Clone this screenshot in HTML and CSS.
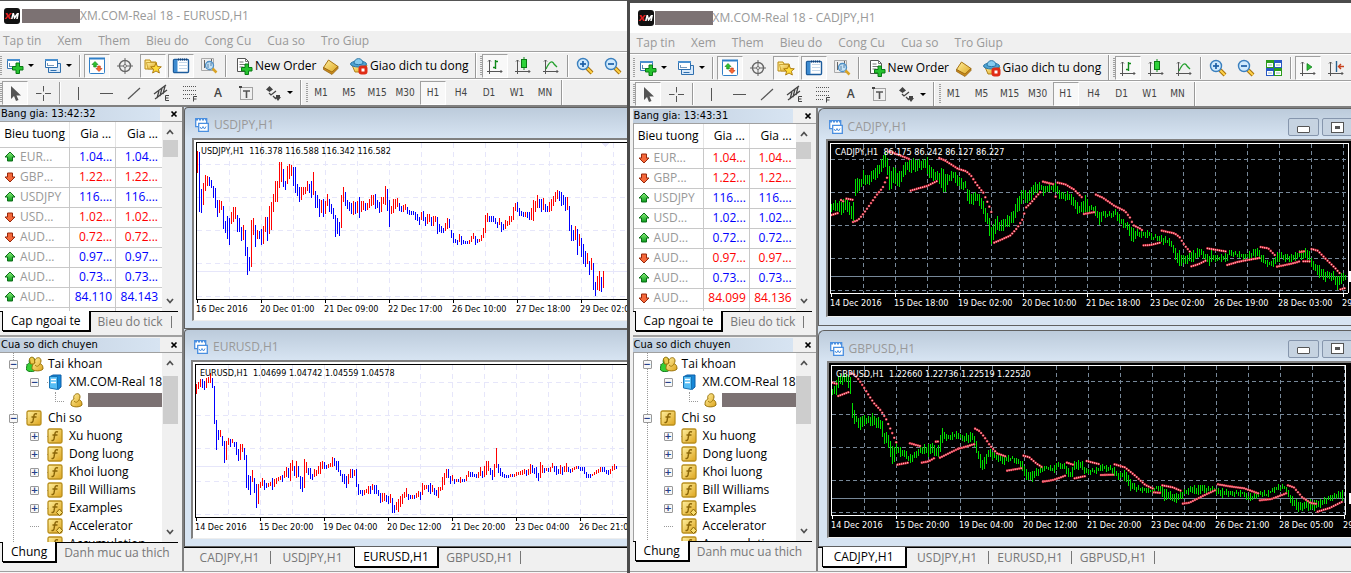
FILE: index.html
```html
<!DOCTYPE html>
<html lang="vi">
<head>
<meta charset="utf-8">
<title>XM.COM-Real 18</title>
<link rel="stylesheet" href="styles.css">
</head>
<body>
<svg class="sprite" aria-hidden="true">
  <linearGradient id="gold" x1="0" y1="0" x2="1" y2="1"><stop offset="0" stop-color="#fff0a0"/><stop offset="1" stop-color="#dda41c"/></linearGradient>
  <linearGradient id="leaf" x1="0" y1="0" x2="0" y2="1"><stop offset="0" stop-color="#8cf07c"/><stop offset="1" stop-color="#0a9a1a"/></linearGradient>
  <symbol id="logo" viewBox="0 0 16 16"><rect width="16" height="16" rx="3" fill="#111"/><path d="M1.500 5h2l1 2 1.500-2h2L5.500 8l1.500 3h-2L4 9l-1.500 2h-2l2.500-3z" fill="#e02020"/><path d="M7 11l1.500-6h1.500l.8 3L13 5h2l-1.200 6h-1.600l.6-3-2 3h-.8l-.8-3-.6 3z" fill="#fff"/></symbol>
  <symbol id="newchart" viewBox="0 0 18 18"><path d="M1.500 2.500h12v9h-12z" fill="#fff" stroke="#3a78b4"/><path d="M1 2h13v2H1z" fill="#4a90cf"/><path d="M3.500 6v4M3 9.500h6" stroke="#5b88b0" fill="none"/><path d="M10 6h3.500v3.500H17V13h-3.500v3.500H10V13H6.500V9.500H10z" fill="#26c22f" stroke="#087a14"/></symbol>
  <symbol id="profiles" viewBox="0 0 18 18"><path d="M4.500 6.500h12v9h-12z" fill="#d8e9fa" stroke="#2f6fae"/><path d="M6.500 13.500h6" stroke="#2f6fae"/><path d="M1.500 2.500h12v8h-12z" fill="#fff" stroke="#2f6fae"/><path d="M1 2h13v2H1z" fill="#4a90cf"/><path d="M3.500 6v3M3 8.500h7" stroke="#7799bb" fill="none"/></symbol>
  <symbol id="market" viewBox="0 0 18 18"><rect x="1.500" y="1.500" width="15" height="15" rx="1" fill="#fff" stroke="#2f7fc8"/><path d="M1 1.500h16" stroke="#2f7fc8" stroke-width="2"/><path d="M4 7.500L7 4.500l3 3H8.300v2.500H5.700V7.500z" fill="#2fc42f" stroke="#0a7a14" stroke-width=".6"/><path d="M8 11.500l3 3 3-3h-1.700V9H9.700v2.500z" fill="#ff6a30" stroke="#b02a08" stroke-width=".6"/></symbol>
  <symbol id="target" viewBox="0 0 18 18"><circle cx="9" cy="9" r="5.500" fill="none" stroke="#666" stroke-width="1.400"/><path d="M9 1v16M1 9h16" stroke="#666"/><circle cx="9" cy="9" r="1.500" fill="#eee" stroke="#777"/></symbol>
  <symbol id="star" viewBox="0 0 18 18"><path d="M1 3h5l1 2h5v7H1z" fill="#ffe98a" stroke="#b98a14"/><path d="M2.500 5.500h10V12H4z" fill="url(#gold)" stroke="#b98a14" stroke-width=".7"/><path d="M12 6l1.500 3.500 3.800.3-2.900 2.500 1 3.700L12 14l-3.400 2 1-3.700-2.900-2.500 3.800-.3z" fill="#ffdb3a" stroke="#a87508" stroke-width=".9"/></symbol>
  <symbol id="terminal" viewBox="0 0 18 18"><rect x="1.500" y="2.500" width="15" height="13" rx="1" fill="#fff" stroke="#1c5c9c" stroke-width="1.400"/><path d="M2 3h3.500v12H2z" fill="#3d8bd0"/><path d="M7 5.500h8M7 8.500h8M7 11.500h8" stroke="#c5d8ea"/><path d="M6 2.500h10" stroke="#173f75" stroke-width="2" stroke-dasharray="1 1"/></symbol>
  <symbol id="tester" viewBox="0 0 18 18"><path d="M1.500 1.500h12v12h-12z" fill="#eee" stroke="#aaa"/><path d="M4.500 3v8M8 4v3M11.500 2v5" stroke="#666"/><circle cx="9.500" cy="8.500" r="4" fill="#bfe0f7" fill-opacity=".85" stroke="#4d8fc6" stroke-width="1.300"/><path d="M8 7v4M11 6v3" stroke="#5580a8"/><path d="M12.500 11.500l4 4" stroke="#d9a326" stroke-width="2.500"/></symbol>
  <symbol id="order" viewBox="0 0 18 18"><path d="M2.500 1.500h8l3 3v10h-11z" fill="#fff" stroke="#555"/><path d="M10.500 1.500v3h3M4.500 5h4M4.500 7.500h6M4.500 10h4" stroke="#777" fill="none"/><path d="M10 7h3.500v3.500H17V14h-3.500v3.500H10V14H6.500v-3.500H10z" fill="#26c22f" stroke="#087a14"/></symbol>
  <symbol id="book" viewBox="0 0 18 18"><path d="M6.500 3L16 9.500 10 16 1.500 10.500z" fill="url(#gold)" stroke="#a87414"/><path d="M1.500 10.500v2L10 17.500l6-6v-2L10 15z" fill="#c98a1c" stroke="#8d5d0c" stroke-width=".7"/></symbol>
  <symbol id="expert" viewBox="0 0 18 18"><path d="M2 8l3 7h9l3-7z" fill="url(#gold)" stroke="#b1821a"/><ellipse cx="8.500" cy="7" rx="8" ry="3" fill="#4ea3d3" stroke="#2a75a5"/><path d="M4 6.500C4 0 13 0 13 6.500 11 8 6 8 4 6.500z" fill="#86ccef" stroke="#2a75a5"/><rect x="8.500" y="8.500" width="9" height="9" rx="3" fill="#e02c16"/><rect x="11.500" y="11.500" width="3" height="3" fill="#fff"/></symbol>
  <symbol id="axes" viewBox="0 0 18 18"><path d="M3.500 3v14M1 14.500h15M2 4.500L3.500 3 5 4.500M14.500 13l1.500 1.500-1.500 1.500" fill="none" stroke="#555"/></symbol>
  <symbol id="bars" viewBox="0 0 18 18"><use href="#axes"/><path d="M9.500 3v9M7 10.500h2M10 4.500h2" stroke="#108a1a" stroke-width="1.400"/></symbol>
  <symbol id="candles" viewBox="0 0 18 18"><use href="#axes"/><path d="M10 0v13" stroke="#108a1a"/><rect x="7.500" y="2.500" width="5" height="8" fill="#2fd23a" stroke="#0a7a14"/></symbol>
  <symbol id="line" viewBox="0 0 18 18"><use href="#axes"/><path d="M4 12q5-11 8-5l3 3" fill="none" stroke="#22a02c" stroke-width="1.300"/></symbol>
  <symbol id="lens" viewBox="0 0 18 18"><path d="M11 11l5 5" stroke="#a8720c" stroke-width="4"/><path d="M11 11l5 5" stroke="#ffd34a" stroke-width="2"/><circle cx="7" cy="7" r="5.500" fill="#cfeafd" stroke="#3a7fbe" stroke-width="1.400"/><path d="M4 7h6" stroke="#1c5fa6" stroke-width="1.700"/></symbol>
  <symbol id="lensplus" viewBox="0 0 18 18"><use href="#lens"/><path d="M7 4v6" stroke="#1c5fa6" stroke-width="1.700"/></symbol>
  <symbol id="tile" viewBox="0 0 18 18"><path d="M1 1h8v8H1zM9 9h8v8H9z" fill="#2c9c1c"/><path d="M9 1h8v8H9zM1 9h8v8H1z" fill="#2858c4"/><path d="M2 4h6v4H2zM10 4h6v4h-6zM2 12h6v4H2zM10 12h6v4h-6z" fill="#fff"/><path d="M3 6h4M11 6h4M3 14h4M11 14h4" stroke="#9bb"/></symbol>
  <symbol id="scroll" viewBox="0 0 18 18"><use href="#axes"/><path d="M8 4.500v7l5-3.500z" fill="#2cba34" stroke="#0a7a14" stroke-width=".7"/></symbol>
  <symbol id="shift" viewBox="0 0 18 18"><use href="#axes"/><path d="M9.500 2v11" stroke="#25618f" stroke-width="1.400"/><path d="M17 7.500h-5M14 5l-2.500 2.500L14 10" fill="none" stroke="#c8401c" stroke-width="1.400"/></symbol>
  <symbol id="cursor" viewBox="0 0 18 18"><path d="M5 2v13l3-3 2 5 2.500-1-2-4.500H15z" fill="#555"/></symbol>
  <symbol id="cross" viewBox="0 0 18 18"><path d="M9.500 2v5.500M9.500 11v6M2 9.500h5.500M11 9.500h6" stroke="#555"/></symbol>
  <symbol id="vline" viewBox="0 0 18 18"><path d="M9.500 3v13" stroke="#555"/></symbol>
  <symbol id="hline" viewBox="0 0 18 18"><path d="M3 9.500h13" stroke="#555"/></symbol>
  <symbol id="trend" viewBox="0 0 18 18"><path d="M3 15L15 4" stroke="#555" stroke-width="1.200"/></symbol>
  <symbol id="channel" viewBox="0 0 18 18"><path d="M1 10L13 1M2 15L14 6M4 14l2-7M7 12l2-8M10 10l2-8" stroke="#444" stroke-width="1.300"/><path d="M16 11.500h-3.500v5H16M12.500 14H15.500" fill="none" stroke="#444"/></symbol>
  <symbol id="fibo" viewBox="0 0 18 18"><path d="M2 2.500h14M2 6.500h14M2 10.500h14M2 14.500h8" stroke="#555" stroke-dasharray="1 1"/><path d="M12.500 17.500v-5H16M12.500 15H15.500" fill="none" stroke="#444"/></symbol>
  <symbol id="label" viewBox="0 0 18 18"><path d="M3.500 3.500h12v12h-12z" fill="none" stroke="#555" stroke-dasharray="1 1"/><path d="M2 2h3v2H2z" fill="#444"/><path d="M6 7h7M9.500 7v7" stroke="#555" stroke-width="1.600"/></symbol>
  <symbol id="shapes" viewBox="0 0 18 18"><path d="M1 5.500L4.500 2 8 5.500 4.500 8zM10 13h6l-3 4z M11 11h4v3h-4z" fill="#444"/><path d="M4 9l2 2 5-4M8 12l3 3" fill="none" stroke="#444" stroke-width="1.300"/></symbol>
  <symbol id="mdi" viewBox="0 0 14 14"><path d="M.7.7h11v8h-11z" fill="#fff" stroke="#4a8fe0" stroke-width="1.300"/><path d="M1 1.500h11" stroke="#4a8fe0" stroke-width="2" stroke-dasharray="2 1"/><path d="M3.700 5.300h9.600v8H3.700z" fill="#fff" stroke="#4a8fe0" stroke-width="1.300"/><path d="M5 9l1.500 2L8 8.500 9.500 11 11 8.500" fill="none" stroke="#4a8fe0"/></symbol>
  <symbol id="up" viewBox="0 0 12 12"><path d="M6 1l5 5H8.500v4h-5V6H1z" fill="url(#leaf)" stroke="#0b6e18"/></symbol>
  <symbol id="down" viewBox="0 0 12 12"><path d="M6 11L1 6h2.500V2h5v4H11z" fill="#f4683a" stroke="#97280c"/></symbol>
  <symbol id="chevup" viewBox="0 0 8 8"><path d="M1 6l3-3.500L7 6" fill="none" stroke="#505050" stroke-width="1.700"/></symbol>
  <symbol id="chevdown" viewBox="0 0 8 8"><path d="M1 2l3 3.500L7 2" fill="none" stroke="#505050" stroke-width="1.700"/></symbol>
  <symbol id="close" viewBox="0 0 8 8"><path d="M1.500 1.500l5 5M6.500 1.500l-5 5" stroke="#000" stroke-width="1.700"/></symbol>
  <symbol id="person" viewBox="0 0 16 16"><path d="M3 13c0-5 1.500-5 3-6-2-5 6-8 6-2 0 1-.5 2-1 2.500 2 1 3 2 3 5.500-2 2.500-9 2.500-11 0z" fill="url(#gold)" stroke="#997208"/><path d="M6 9q2.500 3 5-1" fill="none" stroke="#a87f10"/></symbol>
  <symbol id="people" viewBox="0 0 18 16"><path d="M.5 14c0-5 .5-6 3-7-2-6 5-7 6-2l-1 10c-3 1-6 1-8-1z" fill="#35cf35" stroke="#16801e"/><path d="M3.500 3c1-3 5-2 5 1v4h-4z" fill="#ecc94c" stroke="#997208"/><use href="#person" x="3" y="0" width="16" height="16"/></symbol>
  <symbol id="server" viewBox="0 0 16 16"><path d="M3 2.500L6 1h8v12l-3 2.500z" fill="#1688d8" stroke="#0c5fa8"/><path d="M2.500 2.500h8v13l-8-1.500z" fill="#55bdf5" stroke="#1673b5"/><path d="M4 5.500h5M4 8.500h5" stroke="#fff" stroke-width="1.500"/></symbol>
  <symbol id="func" viewBox="0 0 16 16"><rect x="1" y="1" width="14" height="14" rx="1.500" fill="url(#gold)" stroke="#b98f1d" stroke-width="1.300"/><path d="M11 4q-2.500-1-3 1.500L7 11q-.5 2-2.500 1.300M5.500 7h5" fill="none" stroke="#8a6508" stroke-width="1.400"/></symbol>
  <symbol id="funcx" viewBox="0 0 16 16"><use href="#func"/><path d="M12.500 9l3 3.500-3 3-3-3z" fill="#f8dc6c" stroke="#8a6508"/></symbol>
</svg>

<template id="tools">
  <div class="toolbar">
    <i class="grip"></i>
    <button class="tool drop" aria-label="New chart"><svg><use href="#newchart"/></svg></button>
    <button class="tool drop" aria-label="Profiles"><svg><use href="#profiles"/></svg></button>
    <i class="sep"></i>
    <button class="tool on" aria-label="Market watch"><svg><use href="#market"/></svg></button>
    <button class="tool" aria-label="Data window"><svg><use href="#target"/></svg></button>
    <button class="tool on" aria-label="Navigator"><svg><use href="#star"/></svg></button>
    <button class="tool on" aria-label="Terminal"><svg><use href="#terminal"/></svg></button>
    <button class="tool" aria-label="Tester"><svg><use href="#tester"/></svg></button>
    <i class="sep"></i>
    <button class="tool text order"><svg><use href="#order"/></svg>New Order</button>
    <button class="tool" aria-label="Editor"><svg><use href="#book"/></svg></button>
    <button class="tool text auto"><svg><use href="#expert"/></svg>Giao dich tu dong</button>
    <i class="sep end"></i><i class="grip"></i>
    <button class="tool on" aria-label="Bar chart"><svg><use href="#bars"/></svg></button>
    <button class="tool" aria-label="Candlesticks"><svg><use href="#candles"/></svg></button>
    <button class="tool" aria-label="Line chart"><svg><use href="#line"/></svg></button>
    <i class="sep"></i>
    <button class="tool" aria-label="Zoom in"><svg><use href="#lensplus"/></svg></button>
    <button class="tool" aria-label="Zoom out"><svg><use href="#lens"/></svg></button>
    <button class="tool" aria-label="Tile windows"><svg><use href="#tile"/></svg></button>
    <i class="sep"></i>
    <button class="tool on" aria-label="Auto scroll"><svg><use href="#scroll"/></svg></button>
    <button class="tool" aria-label="Chart shift"><svg><use href="#shift"/></svg></button>
    <i class="sep"></i>
  </div>
  <div class="toolbar last">
    <i class="grip"></i>
    <button class="tool on" aria-label="Cursor"><svg><use href="#cursor"/></svg></button>
    <button class="tool" aria-label="Crosshair"><svg><use href="#cross"/></svg></button>
    <i class="sep"></i>
    <button class="tool" aria-label="Vertical line"><svg><use href="#vline"/></svg></button>
    <button class="tool" aria-label="Horizontal line"><svg><use href="#hline"/></svg></button>
    <button class="tool" aria-label="Trendline"><svg><use href="#trend"/></svg></button>
    <button class="tool" aria-label="Channel"><svg><use href="#channel"/></svg></button>
    <button class="tool" aria-label="Fibonacci"><svg><use href="#fibo"/></svg></button>
    <button class="tool letter">A</button>
    <button class="tool" aria-label="Text label"><svg><use href="#label"/></svg></button>
    <button class="tool drop" aria-label="Arrows"><svg><use href="#shapes"/></svg></button>
    <i class="sep end"></i><i class="grip"></i>
    <button class="tool tf">M1</button><button class="tool tf">M5</button><button class="tool tf">M15</button><button class="tool tf">M30</button><button class="tool tf on">H1</button><button class="tool tf">H4</button><button class="tool tf">D1</button><button class="tool tf">W1</button><button class="tool tf">MN</button>
    <i class="sep end"></i>
  </div>
</template>

<template id="menu">
  <nav class="menu"><button>Tap tin</button><button>Xem</button><button>Them</button><button>Bieu do</button><button>Cong Cu</button><button>Cua so</button><button>Tro Giup</button></nav>
</template>

<template id="navigator">
  <header class="caption"><h2>Cua so dich chuyen</h2><button aria-label="Close"><svg><use href="#close"/></svg></button></header>
  <div class="pane">
    <ul class="tree">
      <li class="l1"><i class="box">−</i><svg class="wide"><use href="#people"/></svg>Tai khoan</li>
      <li class="l2"><i class="box">−</i><svg><use href="#server"/></svg>XM.COM-Real 18</li>
      <li class="l3"><i class="elbow"></i><svg><use href="#person"/></svg><span class="mask"></span></li>
      <li class="l1"><i class="box">−</i><svg><use href="#func"/></svg>Chi so</li>
      <li class="l2"><i class="box">+</i><svg><use href="#func"/></svg>Xu huong</li>
      <li class="l2"><i class="box">+</i><svg><use href="#func"/></svg>Dong luong</li>
      <li class="l2"><i class="box">+</i><svg><use href="#func"/></svg>Khoi luong</li>
      <li class="l2"><i class="box">+</i><svg><use href="#func"/></svg>Bill Williams</li>
      <li class="l2"><i class="box">+</i><svg><use href="#funcx"/></svg>Examples</li>
      <li class="l2"><i class="stub"></i><svg><use href="#funcx"/></svg>Accelerator</li>
      <li class="l2"><i class="stub"></i><svg><use href="#funcx"/></svg>Accumulation</li>
    </ul>
    <div class="scroll"><svg><use href="#chevup"/></svg><i class="thumb tall"></i><svg><use href="#chevdown"/></svg></div>
  </div>
  <div class="tabs"><button class="tab active">Chung</button><button class="tab">Danh muc ua thich</button></div>
</template>

<main class="desk">
  <section class="app first">
    <header class="title"><svg><use href="#logo"/></svg><span class="mask"></span><h1>XM.COM-Real 18 - EURUSD,H1</h1></header>
    <div class="slot" data-template="menu"></div>
    <div class="slot" data-template="tools"></div>
    <div class="work">
      <aside class="side">
        <section class="market">
          <header class="caption"><h2>Bang gia: 13:42:32</h2><button aria-label="Close"><svg><use href="#close"/></svg></button></header>
          <div class="pane">
            <table class="quotes"><thead><tr><th>Bieu tuong</th><th>Gia ...</th><th>Gia ...</th></tr></thead>
            <tbody data-quotes="up|EUR...|1.04...|1.04...;down|GBP...|1.22...|1.22...;up|USDJPY|116....|116....;down|USD...|1.02...|1.02...;down|AUD...|0.72...|0.72...;up|AUD...|0.97...|0.97...;up|AUD...|0.73...|0.73...;up|AUD...|84.110|84.143"></tbody></table>
            <div class="scroll"><svg><use href="#chevup"/></svg><i class="thumb"></i><svg><use href="#chevdown"/></svg></div>
          </div>
          <div class="tabs"><button class="tab active">Cap ngoai te</button><button class="tab ruled">Bieu do tick</button></div>
        </section>
        <section class="navigator slot" data-template="navigator"></section>
      </aside>
      <div class="mdi">
        <article class="chart"><header><svg><use href="#mdi"/></svg><h3>USDJPY,H1</h3></header><div class="frame"><svg class="plot" data-chart="usdjpy"></svg></div></article>
        <article class="chart near"><header><svg><use href="#mdi"/></svg><h3>EURUSD,H1</h3></header><div class="frame"><svg class="plot" data-chart="eurusd"></svg></div></article>
        <nav class="sheets"><button>CADJPY,H1</button><button>USDJPY,H1</button><button class="active">EURUSD,H1</button><button>GBPUSD,H1</button></nav>
      </div>
    </div>
    <footer class="status"></footer>
  </section>

  <section class="app second">
    <header class="title"><svg><use href="#logo"/></svg><span class="mask"></span><h1>XM.COM-Real 18 - CADJPY,H1</h1></header>
    <div class="slot" data-template="menu"></div>
    <div class="slot" data-template="tools"></div>
    <div class="work">
      <aside class="side">
        <section class="market">
          <header class="caption"><h2>Bang gia: 13:43:31</h2><button aria-label="Close"><svg><use href="#close"/></svg></button></header>
          <div class="pane">
            <table class="quotes"><thead><tr><th>Bieu tuong</th><th>Gia ...</th><th>Gia ...</th></tr></thead>
            <tbody data-quotes="down|EUR...|1.04...|1.04...;down|GBP...|1.22...|1.22...;up|USDJPY|116....|116....;up|USD...|1.02...|1.02...;up|AUD...|0.72...|0.72...;down|AUD...|0.97...|0.97...;up|AUD...|0.73...|0.73...;down|AUD...|84.099|84.136"></tbody></table>
            <div class="scroll"><svg><use href="#chevup"/></svg><i class="thumb"></i><svg><use href="#chevdown"/></svg></div>
          </div>
          <div class="tabs"><button class="tab active">Cap ngoai te</button><button class="tab ruled">Bieu do tick</button></div>
        </section>
        <section class="navigator slot" data-template="navigator"></section>
      </aside>
      <div class="mdi">
        <article class="chart dark"><header><svg><use href="#mdi"/></svg><h3>CADJPY,H1</h3><button class="min" aria-label="Minimize"></button><button class="max" aria-label="Maximize"></button></header><div class="frame"><svg class="plot" data-chart="cadjpy"></svg></div></article>
        <article class="chart dark far"><header><svg><use href="#mdi"/></svg><h3>GBPUSD,H1</h3><button class="min" aria-label="Minimize"></button><button class="max" aria-label="Maximize"></button></header><div class="frame"><svg class="plot" data-chart="gbpusd"></svg></div></article>
        <nav class="sheets"><button class="active">CADJPY,H1</button><button>USDJPY,H1</button><button>EURUSD,H1</button><button>GBPUSD,H1</button></nav>
      </div>
    </div>
    <footer class="status"></footer>
  </section>
</main>
<script src="app.js"></script>
</body>
</html>
```

FILE: styles.css
```css
* { box-sizing: border-box; }
body { margin: 0; font: 12px/16px "Open Sans", "Noto Sans", sans-serif; color: #000; background: #4b4b4b; }
button { font: inherit; color: inherit; background: none; border: 0; padding: 0; margin: 0; white-space: nowrap; }
h1, h2, h3 { margin: 0; font: inherit; white-space: nowrap; }
i { font-style: normal; }
svg { display: block; flex: none; }
.sprite { position: absolute; width: 0; height: 0; }
.slot { display: contents; }

.desk { display: flex; height: 100vh; min-height: 573px; overflow: hidden; }
.app { display: flex; flex-direction: column; min-width: 0; background: #f0f0f0; overflow: hidden; }
.first { flex: 628 1 0; border-top: 1px solid #555; }
.second { flex: 723 1 0; border: solid #4b4b4b; border-width: 3px 0 0 3px; }

.title { display: flex; align-items: center; height: 30px; padding-left: 4px; background: #fff; color: #999; flex: none; }
.title svg { width: 16px; height: 16px; margin-right: 2px; }
.title .mask { width: 58px; height: 14px; }
.mask { background: #7c7273; }
.second .title { padding-left: 8px; }
.second .title svg { margin-right: 1px; }
.menu { display: flex; gap: 16px; height: 21px; padding-left: 3px; border-bottom: 1px solid #a0a0a0; color: #999; flex: none; }
.second .menu { padding-left: 7px; }

.toolbar { display: flex; align-items: center; height: 27px; border-top: 1px solid #fff; border-bottom: 1px solid #a0a0a0; flex: none; overflow: hidden; }
.toolbar > * { flex: none; }
.toolbar.last { height: 28px; border-bottom: 2px solid #808080; }
.second .toolbar { padding-left: 3px; }
.second .toolbar.last { height: 27px; }
.grip { width: 2px; height: 20px; background: repeating-linear-gradient(#a0a0a0 0 1px, #f0f0f0 1px 2px); }
.sep { width: 2px; height: 22px; margin: 0 3px 0 1px; border-left: 1px solid #999; border-right: 1px solid #fff; }
.sep.end { height: 27px; }
.tool { display: flex; align-items: center; justify-content: center; width: 26px; height: 24px; margin-right: 2px; }
.tool svg { width: 18px; height: 18px; }
.tool.on { border: 1px solid #fff; border-top-color: #a0a0a0; border-left-color: #a0a0a0; background: #f8f8f8; }
.tool.drop { width: 36px; justify-content: flex-start; padding-left: 4px; gap: 4px; }
.tool.drop::after { content: ""; border: 3px solid transparent; border-top-color: #000; border-bottom: 0; }
.tool.text { justify-content: flex-start; gap: 2px; padding-left: 5px; }
.tool.order { width: 88px; margin: 0; }
.tool.auto { width: 128px; margin: 0; padding-left: 4px; }
.toolbar.last .sep { margin-right: 4px; }
.letter { color: #444; font-weight: 600; }
.tf { font: 10px/14px "DejaVu Sans Condensed", "Liberation Sans", sans-serif; color: #444; }

.work { display: flex; flex: 1; min-height: 0; }
.side { display: flex; flex-direction: column; width: 184px; flex: none; border-right: 2px solid #808080; }
.second .side { width: 188px; padding-left: 3px; padding-top: 1px; }
.caption { display: flex; align-items: center; justify-content: space-between; height: 15px; padding-right: 4px; font: 11px/14px "DejaVu Sans Condensed", "Liberation Sans", sans-serif; background: linear-gradient(90deg, #bfcddd, #d7e4f2 160px, #f0f0f0 160px); border-bottom: 1px solid #a0a0a0; padding-left: 1px; flex: none; }
.caption svg { width: 8px; height: 8px; }
.market { flex: none; padding-bottom: 4px; border-bottom: 2px solid #a0a0a0; }
.market .pane { height: 189px; }
.second .market .pane { height: 187px; }
.pane { display: flex; overflow: hidden; background: #fff; margin-right: 4px; }
.second .pane { border-left: 1px solid #a0a0a0; }
.side .navigator { display: flex; flex-direction: column; flex: 1; min-height: 0; padding-top: 1px; padding-bottom: 9px; }
.second .side .navigator { padding-bottom: 10px; }
.navigator .pane { flex: 1; min-height: 0; }
.scroll { display: flex; flex-direction: column; align-items: center; width: 16px; flex: none; background: #f0f0f0; padding: 6px 0; }
.scroll svg { width: 8px; height: 8px; }
.thumb { width: 15px; height: 17px; margin: 4px 0 auto; background: #cdcdcd; }
.thumb.tall { height: 48px; margin-top: 9px; }
.quotes { border-collapse: collapse; table-layout: fixed; width: 162px; flex: none; align-self: flex-start; }
.quotes th, .quotes td { height: 20px; padding: 0 3px 0 0; border: 1px solid #c8c8c8; border-width: 0 1px 1px 0; text-align: right; font-weight: 400; }
.quotes th { height: 25px; width: 46px; padding-right: 4px; border-right-color: #e4e4e4; }
.second .quotes th { height: 24px; }
.quotes th:first-child { width: 69px; }
.quotes th:last-child, .quotes td:last-child { border-right: 0; padding-right: 4px; }
.quotes td:first-child { color: #999; text-align: left; padding-left: 4px; }
.symbol { display: flex; align-items: center; gap: 4px; }
.symbol svg { width: 12px; height: 12px; }
.up { color: #0000ff; }
.down { color: #ff0000; }
.tabs { display: flex; height: 20px; border-top: 1px solid #000; flex: none; padding-left: 2px; margin-right: 4px; color: #777; }
.tab { height: 19px; padding: 0 8px; }
.tab.active { margin-top: -1px; height: 20px; background: #fff; color: #000; border: 1px solid #000; border-top: 0; box-shadow: 1px 1px #000; padding: 0 8px; }
.tab.ruled::after { content: ""; display: inline-block; height: 12px; border-right: 1px solid #777; margin-left: 8px; vertical-align: -2px; }

.tree { list-style: none; margin: 0; padding: 2px 0 0; width: 162px; flex: none; overflow: hidden; background: repeating-linear-gradient(#999 0 1px, #fff 1px 2px) 13px 0 / 1px 100% no-repeat; }
.tree li { display: flex; align-items: center; height: 18px; white-space: nowrap; }
.tree li svg { width: 16px; height: 16px; margin-right: 6px; margin-left: 4px; }
.tree li svg.wide { width: 18px; margin-right: 4px; }
.tree li::before { content: ""; flex: none; }
.l1::before { width: 9px; }
.l2::before { width: 30px; }
.l3::before { width: 55px; }
.l1 .box, .l2 .box { display: flex; align-items: center; justify-content: center; width: 9px; height: 9px; border: 1px solid #999; border-radius: 1px; background: #f8f8f8; color: #25408a; font: bold 9px/7px "DejaVu Sans", sans-serif; flex: none; }
.box, .stub { margin-right: 4px; }
.box + svg { background: repeating-linear-gradient(90deg, #999 0 1px, #fff 1px 2px) 0 50% / 2px 1px no-repeat; }
.stub { width: 9px; border-bottom: 1px dotted #999; height: 1px; }
.elbow { width: 10px; height: 10px; margin-bottom: 6px; border: dotted #999; border-width: 0 0 1px 1px; }
.tree .l3 svg { margin-right: 4px; }
.tree .mask { width: 80px; height: 14px; }

.mdi { display: flex; flex-direction: column; flex: 1; min-width: 0; background: #d7e4f2; }
.chart { display: flex; flex-direction: column; flex: 222 1 0; min-height: 0; padding: 0 0 7px 7px; border: solid #606060; border-width: 1px 0 1px 1px; border-radius: 4px 0 0 0; background: linear-gradient(#bccbdb, #d7e4f2 30px); }
.near { flex-grow: 218; padding-left: 6px; }
.chart header { display: flex; align-items: center; gap: 5px; height: 30px; padding: 4px 0 0 3px; color: #999; flex: none; font-size: 12px; }
.chart header svg { width: 14px; height: 14px; }
.chart h3 { flex: 1; }
.frame { flex: 1; min-height: 0; min-width: 0; border: 1px solid #808080; border-width: 2px 0 1px 2px; border-bottom-color: #eee; background: #fff; padding: 2px 0 0 2px; overflow: hidden; }
.plot { width: 100%; height: 100%; font: 9px "DejaVu Sans Condensed", "Liberation Sans", sans-serif; }
.plot text { white-space: pre; }
.dark { padding: 0 0 8px 7px; margin-bottom: 4px; border-radius: 6px 0 0 0; flex-grow: 216; }
.dark.far { margin-bottom: 0; padding-left: 8px; }
.dark .frame { background: #000; }
.dark header { padding-top: 6px; }
.chart header button { width: 31px; height: 18px; border: 1px solid #8696ad; border-radius: 2px; background: #c6d3e1; display: flex; align-items: center; justify-content: center; margin-right: -2px; flex: none; }
.min::before { content: ""; width: 11px; height: 5px; margin-top: 4px; border: 1px solid #555; background: #fff; border-radius: 1px; }
.max::before { content: ""; width: 11px; height: 9px; border: 3px solid #fff; outline: 1px solid #555; background: #555; box-sizing: border-box; }

.sheets { display: flex; height: 24px; flex: none; background: #f0f0f0; border-top: 1px solid #000; color: #777; padding-left: 4px; }
.sheets button { position: relative; height: 19px; width: 83px; padding: 0; }
.sheets button:not(.active)::after { content: ""; position: absolute; right: 0; top: 3px; height: 13px; border-right: 1px solid #777; }
.sheets button:has(+ .active)::after { display: none; }
.sheets .active { margin-top: -1px; height: 20px; width: 84px; background: #fff; color: #000; border: 1px solid #000; border-top: 0; box-shadow: 1px 1px #000; }
.status { height: 2px; border-top: 1px solid #a0a0a0; flex: none; background: #f8f8f8; }
```

FILE: app.js
```js
document.querySelectorAll('[data-template]').forEach(function (slot) {
  slot.append(document.getElementById(slot.dataset.template).content.cloneNode(true));
});

document.querySelectorAll('[data-quotes]').forEach(function (body) {
  body.innerHTML = body.dataset.quotes.split(';').map(function (row) {
    var c = row.split('|');
    return '<tr class="' + c[0] + '"><td><span class="symbol"><svg><use href="#' + c[0] + '"/></svg>' + c[1] +
      '</span></td><td>' + c[2] + '</td><td>' + c[3] + '</td></tr>';
  }).join('') + '<tr><td></td><td></td><td></td></tr>';
});

// Vertical values are thirds of a pixel; "bars" holds high-low per bar,
// "path" holds x,high,low keyframes that are interpolated per bar.
var charts = {
  usdjpy: {
    top: 109, bottom: 580, title: 'USDJPY,H1  116.378 116.588 116.342 116.582',
    grid: [175, 274, 373, 472, 571], price: 496,
    dates: ['16 Dec 2016', '20 Dec 01:00', '21 Dec 09:00', '22 Dec 17:00', '26 Dec 10:00', '27 Dec 18:00', '29 Dec 02:00'],
    bars: '135-201 138-320 250-323 231-297 207-257 210-240 213-240 222-246 240-276 247-306 282-335 282-322 286-312 300-369 345-383 331-399 336-419 318-356 303-350 303-341 327-380 336-380 363-407 357-402 372-452 423-507 453-495 343-483 337-389 357-423 373-401 377-401 369-419 360-416 333-380 334-405 300-384 290-372 266-320 225-290 225-289 168-246 168-230 190-243 225-252 180-235 174-220 178-212 183-240 184-261 234-270 243-288 244-284 243-268 243-264 226-255 236-261 225-276 200-267 255-308 268-308 279-333 282-321 280-335 285-326 264-300 279-320 294-324 306-340 327-395 336-386 348-392 268-366 243-290 258-302 282-310 289-315 292-324 285-327 288-325 285-322 274-336 285-318 285-312 292-315 291-312 280-306 267-300 268-297 266-309 282-306 290-321 275-320 273-295 240-297 250-315 282-363 300-326 279-321 279-310 276-303 291-315 300-320 297-320 294-312 303-324 312-327 315-327 315-328 318-342 324-345 333-357 318-342 315-345 335-360 326-356 326-350 333-360 330-360 330-348 333-384 355-380 360-382 366-381 353-376 336-369 340-366 372-396 381-411 399-413 402-418 384-410 390-417 402-414 405-414 405-414 402-414 390-410 382-400 390-417 399-411 399-408 388-405 366-396 327-381 323-350 330-350 331-349 330-350 336-355 350-366 337-357 348-378 354-372 342-370 345-360 330-357 330-348 303-342 291-315 290-318 306-330 316-332 320-335 318-335 320-338 318-342 306-342 282-345 285-318 267-306 280-307 280-318 276-312 294-320 300-318 290-320 280-315 272-300 258-288 252-280 255-285 258-300 267-298 275-315 273-312 300-375 357-405 372-405 360-402 369-447 384-420 396-453 416-474 435-483 441-475 465-507 456-492 471-554 530-570 510-552 495-557 515-558 495-546'
  },
  eurusd: {
    top: 97, bottom: 556, title: 'EURUSD,H1  1.04699 1.04742 1.04559 1.04578',
    grid: [151, 250, 349, 448, 547], price: 403,
    dates: ['14 Dec 2016', '15 Dec 20:00', '19 Dec 04:00', '20 Dec 12:00', '21 Dec 20:00', '23 Dec 04:00', '26 Dec 21:00'],
    bars: '158-186 150-172 141-165 141-168 147-174 138-168 135-153 125-153 138-170 162-276 264-354 294-324 294-315 312-342 327-393 327-384 318-339 321-345 321-335 330-345 331-369 351-388 336-384 336-362 348-386 369-468 429-474 432-489 414-450 438-483 456-528 456-516 450-470 438-462 444-474 454-468 454-466 450-462 438-474 443-466 438-456 435-448 433-446 429-450 417-440 405-435 408-440 393-447 384-417 402-432 387-438 402-435 432-471 435-480 381-470 390-423 408-430 410-441 426-444 412-435 414-432 402-426 390-426 387-411 390-411 399-412 397-408 393-405 375-405 378-402 387-414 387-420 414-432 426-450 426-456 432-468 426-456 411-438 411-438 414-432 411-465 457-489 474-486 474-492 474-489 471-483 462-486 462-486 456-474 459-486 459-486 474-492 483-513 483-510 483-507 490-510 492-516 486-513 500-545 519-543 510-534 501-540 492-525 486-516 480-498 468-495 486-504 489-502 489-501 489-501 484-498 478-495 480-504 453-489 459-475 459-473 459-480 454-486 459-480 468-490 474-492 466-498 465-478 435-474 423-460 411-438 411-438 432-456 429-447 441-456 441-450 441-452 435-453 441-450 441-450 429-448 417-435 420-435 420-435 426-435 426-438 420-440 405-432 417-438 402-435 387-430 387-418 408-430 414-444 396-435 348-408 396-423 408-432 420-435 426-438 429-438 429-438 426-437 426-437 426-435 420-432 420-430 417-429 414-430 411-426 414-432 411-430 396-426 399-423 408-428 405-438 423-447 390-438 399-424 408-423 408-419 408-420 405-420 393-408 402-420 402-429 411-426 399-426 405-430 402-420 393-420 405-420 411-423 408-420 405-414 402-411 402-411 405-417 405-418 405-426 420-438 426-438 426-438 426-433 420-430 414-426 411-423 405-420 405-420 405-420 414-426 414-430 411-426 402-417 396-414 402-411'
  },
  cadjpy: {
    dark: true, inset: 3, x0: 40, top: 101, bottom: 550, title: 'CADJPY,H1  86.175 86.242 86.127 86.227',
    grid: [148, 247, 346, 445, 543], price: 501,
    dates: ['14 Dec 2016', '15 Dec 18:00', '19 Dec 02:00', '20 Dec 10:00', '21 Dec 18:00', '23 Dec 02:00', '26 Dec 19:00', '28 Dec 03:00', '29 Dec 11:00'],
    path: '40,285,308 52,275,300 64,280,312 75,270,312 85,268,300 95,285,325 104,290,340 110,205,265 118,208,245 127,210,240 134,185,222 145,200,230 155,190,220 165,180,210 178,168,205 188,150,180 195,122,175 203,140,180 209,165,245 215,190,243 222,170,215 230,185,230 243,190,230 252,165,200 262,155,185 272,148,188 285,150,185 300,150,180 310,153,175 320,143,185 327,165,205 340,183,213 355,190,215 366,172,250 375,195,245 385,195,215 397,185,210 410,195,230 420,208,238 433,220,240 440,240,280 452,253,290 460,250,275 470,253,280 480,262,300 490,290,330 497,310,345 506,335,400 512,365,400 518,330,390 524,318,355 532,335,368 545,330,362 555,320,350 565,315,350 575,300,335 583,270,315 592,255,300 602,238,270 612,250,283 622,240,275 632,225,258 645,218,248 655,225,240 663,232,262 675,227,245 690,225,245 697,218,245 705,240,265 720,250,272 735,248,272 748,260,290 758,275,305 765,288,315 775,280,310 786,257,310 797,290,305 810,290,310 818,300,325 827,312,348 835,303,325 850,310,322 865,308,325 873,298,320 882,312,340 892,330,350 905,340,360 915,345,380 922,358,408 930,360,385 945,365,382 960,368,385 970,362,382 980,378,390 1000,378,392 1010,380,405 1020,385,400 1035,392,410 1045,410,440 1052,430,460 1060,425,470 1070,440,465 1080,440,462 1090,433,460 1097,420,455 1105,430,455 1115,415,440 1125,420,440 1135,430,450 1146,440,468 1153,425,460 1160,435,455 1175,440,455 1190,435,455 1197,435,460 1207,423,440 1225,428,440 1240,430,445 1252,435,455 1262,430,445 1275,425,445 1287,413,440 1295,425,445 1305,440,460 1318,455,470 1330,455,470 1343,440,465 1350,425,455 1360,432,450 1372,435,455 1385,438,458 1397,433,455 1410,425,445 1425,420,450 1438,418,450 1445,440,475 1455,462,480 1465,465,500 1475,475,505 1485,485,515 1500,488,508 1515,490,520 1522,505,542 1530,495,530 1540,490,515 1547,497,515',
    sar: [[40,317,62,310],[68,272,76,277],[84,268,105,272],[103,338,118,332,130,318,150,290,170,260,190,235,204,202],[208,127,220,130,250,142,270,150],[272,244,295,237,320,230,350,215],[356,146,375,155,410,178,435,186,450,200,465,225,485,250,500,285,512,318],[517,400,540,390,565,378,585,355,600,330,610,295,625,280,640,262,655,245],[660,217,692,225],[697,262,701,262],[703,220,725,225,750,240,778,268],[780,314,800,310,815,308],[815,256,835,265,870,290,900,305,915,325,925,348,945,358,952,364],[955,408,975,407,1003,400],[1008,364,1045,372,1060,383,1075,408,1093,430],[1095,471,1115,465,1138,453],[1142,417,1170,422,1200,427],[1200,467,1230,458,1260,452,1295,446],[1298,413,1320,417,1340,438],[1346,472,1370,467,1400,460,1412,456],[1413,428,1425,426],[1423,456,1445,456],[1447,419,1465,424,1490,450,1515,475,1530,492],[1532,540,1547,536]]
  },
  gbpusd: {
    dark: true, inset: 6, x0: 43, top: 103, bottom: 552, title: 'GBPUSD,H1  1.22660 1.22736 1.22519 1.22520',
    grid: [152, 250, 349, 448, 545], price: 501,
    dates: ['14 Dec 2016', '15 Dec 20:00', '19 Dec 04:00', '20 Dec 12:00', '21 Dec 20:00', '23 Dec 04:00', '26 Dec 21:00', '28 Dec 05:00', '29 Dec 13:00'],
    path: '43,175,193 52,160,195 60,132,175 70,135,158 85,130,155 95,130,180 98,180,235 104,235,280 112,250,275 120,265,293 130,255,295 140,258,275 150,262,282 160,250,285 172,262,290 182,262,295 190,275,315 197,310,348 205,305,335 213,330,380 219,350,403 226,345,388 233,340,365 245,355,378 258,360,378 265,372,395 272,375,395 285,365,385 297,352,372 307,345,368 315,345,370 325,342,375 335,335,368 345,350,375 355,345,382 362,292,350 370,300,325 380,315,330 395,308,325 410,302,322 425,315,330 440,310,335 455,305,330 461,320,350 467,340,375 474,370,400 482,385,420 490,380,418 497,360,385 505,355,378 515,365,385 530,370,390 545,375,402 555,375,395 570,378,388 582,382,400 597,392,410 603,395,435 612,420,445 622,425,452 632,420,450 642,415,435 655,405,430 665,408,418 680,407,418 693,410,428 700,392,415 715,398,412 728,400,425 738,425,445 745,415,438 752,390,420 762,392,415 773,390,415 780,405,425 790,415,432 805,415,428 820,412,428 832,400,418 845,405,420 860,408,422 870,412,435 882,428,445 895,422,440 905,422,455 913,440,475 922,455,478 935,465,480 950,470,483 965,472,486 975,475,486 985,470,482 1000,465,478 1012,468,505 1022,478,508 1035,485,505 1042,490,518 1052,490,512 1065,480,505 1075,478,492 1090,470,488 1100,465,485 1112,470,495 1125,460,485 1140,470,485 1155,468,480 1170,475,490 1182,475,498 1195,478,495 1215,483,495 1230,480,495 1250,483,495 1260,492,512 1272,492,508 1290,485,500 1300,480,495 1315,485,498 1330,475,488 1345,465,480 1360,463,478 1370,465,475 1378,475,500 1388,495,520 1398,505,530 1408,510,542 1418,518,540 1430,510,535 1445,510,540 1460,510,535 1470,508,530 1485,503,522 1500,495,510 1515,490,505 1525,485,500 1537,480,510',
    sar: [[43,156,57,160],[60,196,75,190,92,184],[95,127,108,132,120,147,135,170,150,195,165,218,185,240,200,265,215,300,232,340],[234,402,265,396],[270,338,303,347],[305,396,325,392,342,382],[346,333,356,332],[358,381,380,370,410,355,460,340],[461,294,475,302,490,322,505,345,525,368,550,377],[555,420,600,412],[603,375,620,380,640,398,658,410],[660,453,690,448,728,434],[730,396,748,402],[753,443,785,436],[788,391,828,401],[830,433,868,432],[870,401,900,410,930,435,960,463,983,474],[985,485,1008,487],[1010,464,1040,470,1068,482],[1070,519,1090,516,1130,495,1168,477],[1173,461,1200,466,1250,473,1293,489],[1296,509,1330,505,1375,487],[1378,464,1395,470,1420,500,1445,517,1465,520],[1465,543,1500,532,1537,513]]
  }
};

var UNIT = 5.862;

function interpolate(points, x, column) {
  var i = 1;
  while (i < points.length - 1 && points[i][0] < x) i++;
  var a = points[i - 1], b = points[i];
  var t = Math.max(0, Math.min(1, (x - a[0]) / (b[0] - a[0])));
  return a[column] + (b[column] - a[column]) * t;
}

function barList(c) {
  if (c.bars) return c.bars.split(' ').map(function (b) { return b.split('-').map(Number); });
  var points = c.path.split(' ').map(function (p) { return p.split(',').map(Number); });
  var list = [], end = points[points.length - 1][0];
  for (var x = c.x0, i = 0; x <= end + 1; x += UNIT, i++) {
    list.push([
      interpolate(points, x, 1) + 4 * Math.sin(i * 2.7),
      interpolate(points, x, 2) + 4 * Math.sin(i * 4.1)
    ]);
  }
  return list;
}

function pairs(s) {
  var list = [];
  for (var k = 0; k < s.length; k += 2) list.push([s[k], s[k + 1]]);
  return list;
}

function draw(svg, c) {
  var ink = c.dark ? '#fff' : '#000', gridInk = c.dark ? '#778899' : '#e6e6fa';
  var y = function (v) { return Math.round((v - c.top) / 3); };
  var h = y(c.bottom), out = '', k;
  var edge = svg.clientWidth - (c.inset || -4);
  var dash = c.dark ? '4 3' : '5 4';
  for (k = 1; 1 + k * 32 < edge; k++) {
    out += '<path d="M' + (k * 32 + 1.5) + ' 1V' + h + '" stroke="' + gridInk + '" stroke-dasharray="' + dash + '"/>';
  }
  c.grid.forEach(function (g) {
    out += '<path d="M1 ' + (y(g) + 0.5) + 'H' + edge + '" stroke="' + gridInk + '" stroke-dasharray="' + dash + '"/>';
  });
  out += '<path d="M1 ' + (y(c.price) + 0.5) + 'H' + edge + '" stroke="' + gridInk + '"/>';
  if (c === charts.usdjpy) out += '<path d="M405 1h9l-4.500 4z" fill="#e6e6fa"/>';
  if (c.dark) out += '<rect x="' + (svg.clientWidth - 2) + '" y="' + (y(c.price) - 5) + '" width="2" height="11" fill="#fff"/>';
  var last = null;
  barList(c).forEach(function (b, i) {
    var mid = b[0] + b[1];
    var color = c.dark ? '#00e000' : (last === null || mid < last ? '#f00' : '#00f');
    last = mid;
    out += '<rect x="' + (1 + i * 2) + '" y="' + y(b[0]) + '" width="1" height="' + Math.max(2, y(b[1]) - y(b[0])) + '" fill="' + color + '"/>';
  });
  out = '<g shape-rendering="crispEdges" fill="none">' + out + '</g>';
  (c.sar || []).forEach(function (s) {
    var pts = pairs(s);
    for (var x = s[0]; x <= s[s.length - 2]; x += UNIT) {
      var px = 1.5 + (x - c.x0) / UNIT * 2, py = (interpolate(pts, x, 1) - c.top) / 3;
      out += '<circle cx="' + px + '" cy="' + py + '" r="1.300" fill="#d8283c"/><circle cx="' + px + '" cy="' + py + '" r=".7" fill="#ffc4c8"/>';
    }
  });
  out += '<g shape-rendering="crispEdges"><path d="M.5 ' + (h + 0.5) + 'V.5H' + edge + (c.dark ? 'V' + h : 'M0 0') + 'M0 ' + (h + 0.5) + 'H' + edge + '" fill="none" stroke="' + ink + '"/>';
  c.dates.forEach(function (d, i) { out += '<path d="M' + (1.5 + i * 64) + ' ' + h + 'v4" stroke="' + ink + '"/>'; });
  out += '</g>';
  c.dates.forEach(function (d, i) { out += '<text x="' + i * 64 + '" y="' + (h + 13) + '" fill="' + ink + '">' + d + '</text>'; });
  out += '<text x="5" y="12" fill="' + ink + '">' + c.title + '</text>';
  svg.innerHTML = out;
}

function drawAll() {
  document.querySelectorAll('[data-chart]').forEach(function (svg) { draw(svg, charts[svg.dataset.chart]); });
}
drawAll();
window.addEventListener('resize', drawAll);
```
